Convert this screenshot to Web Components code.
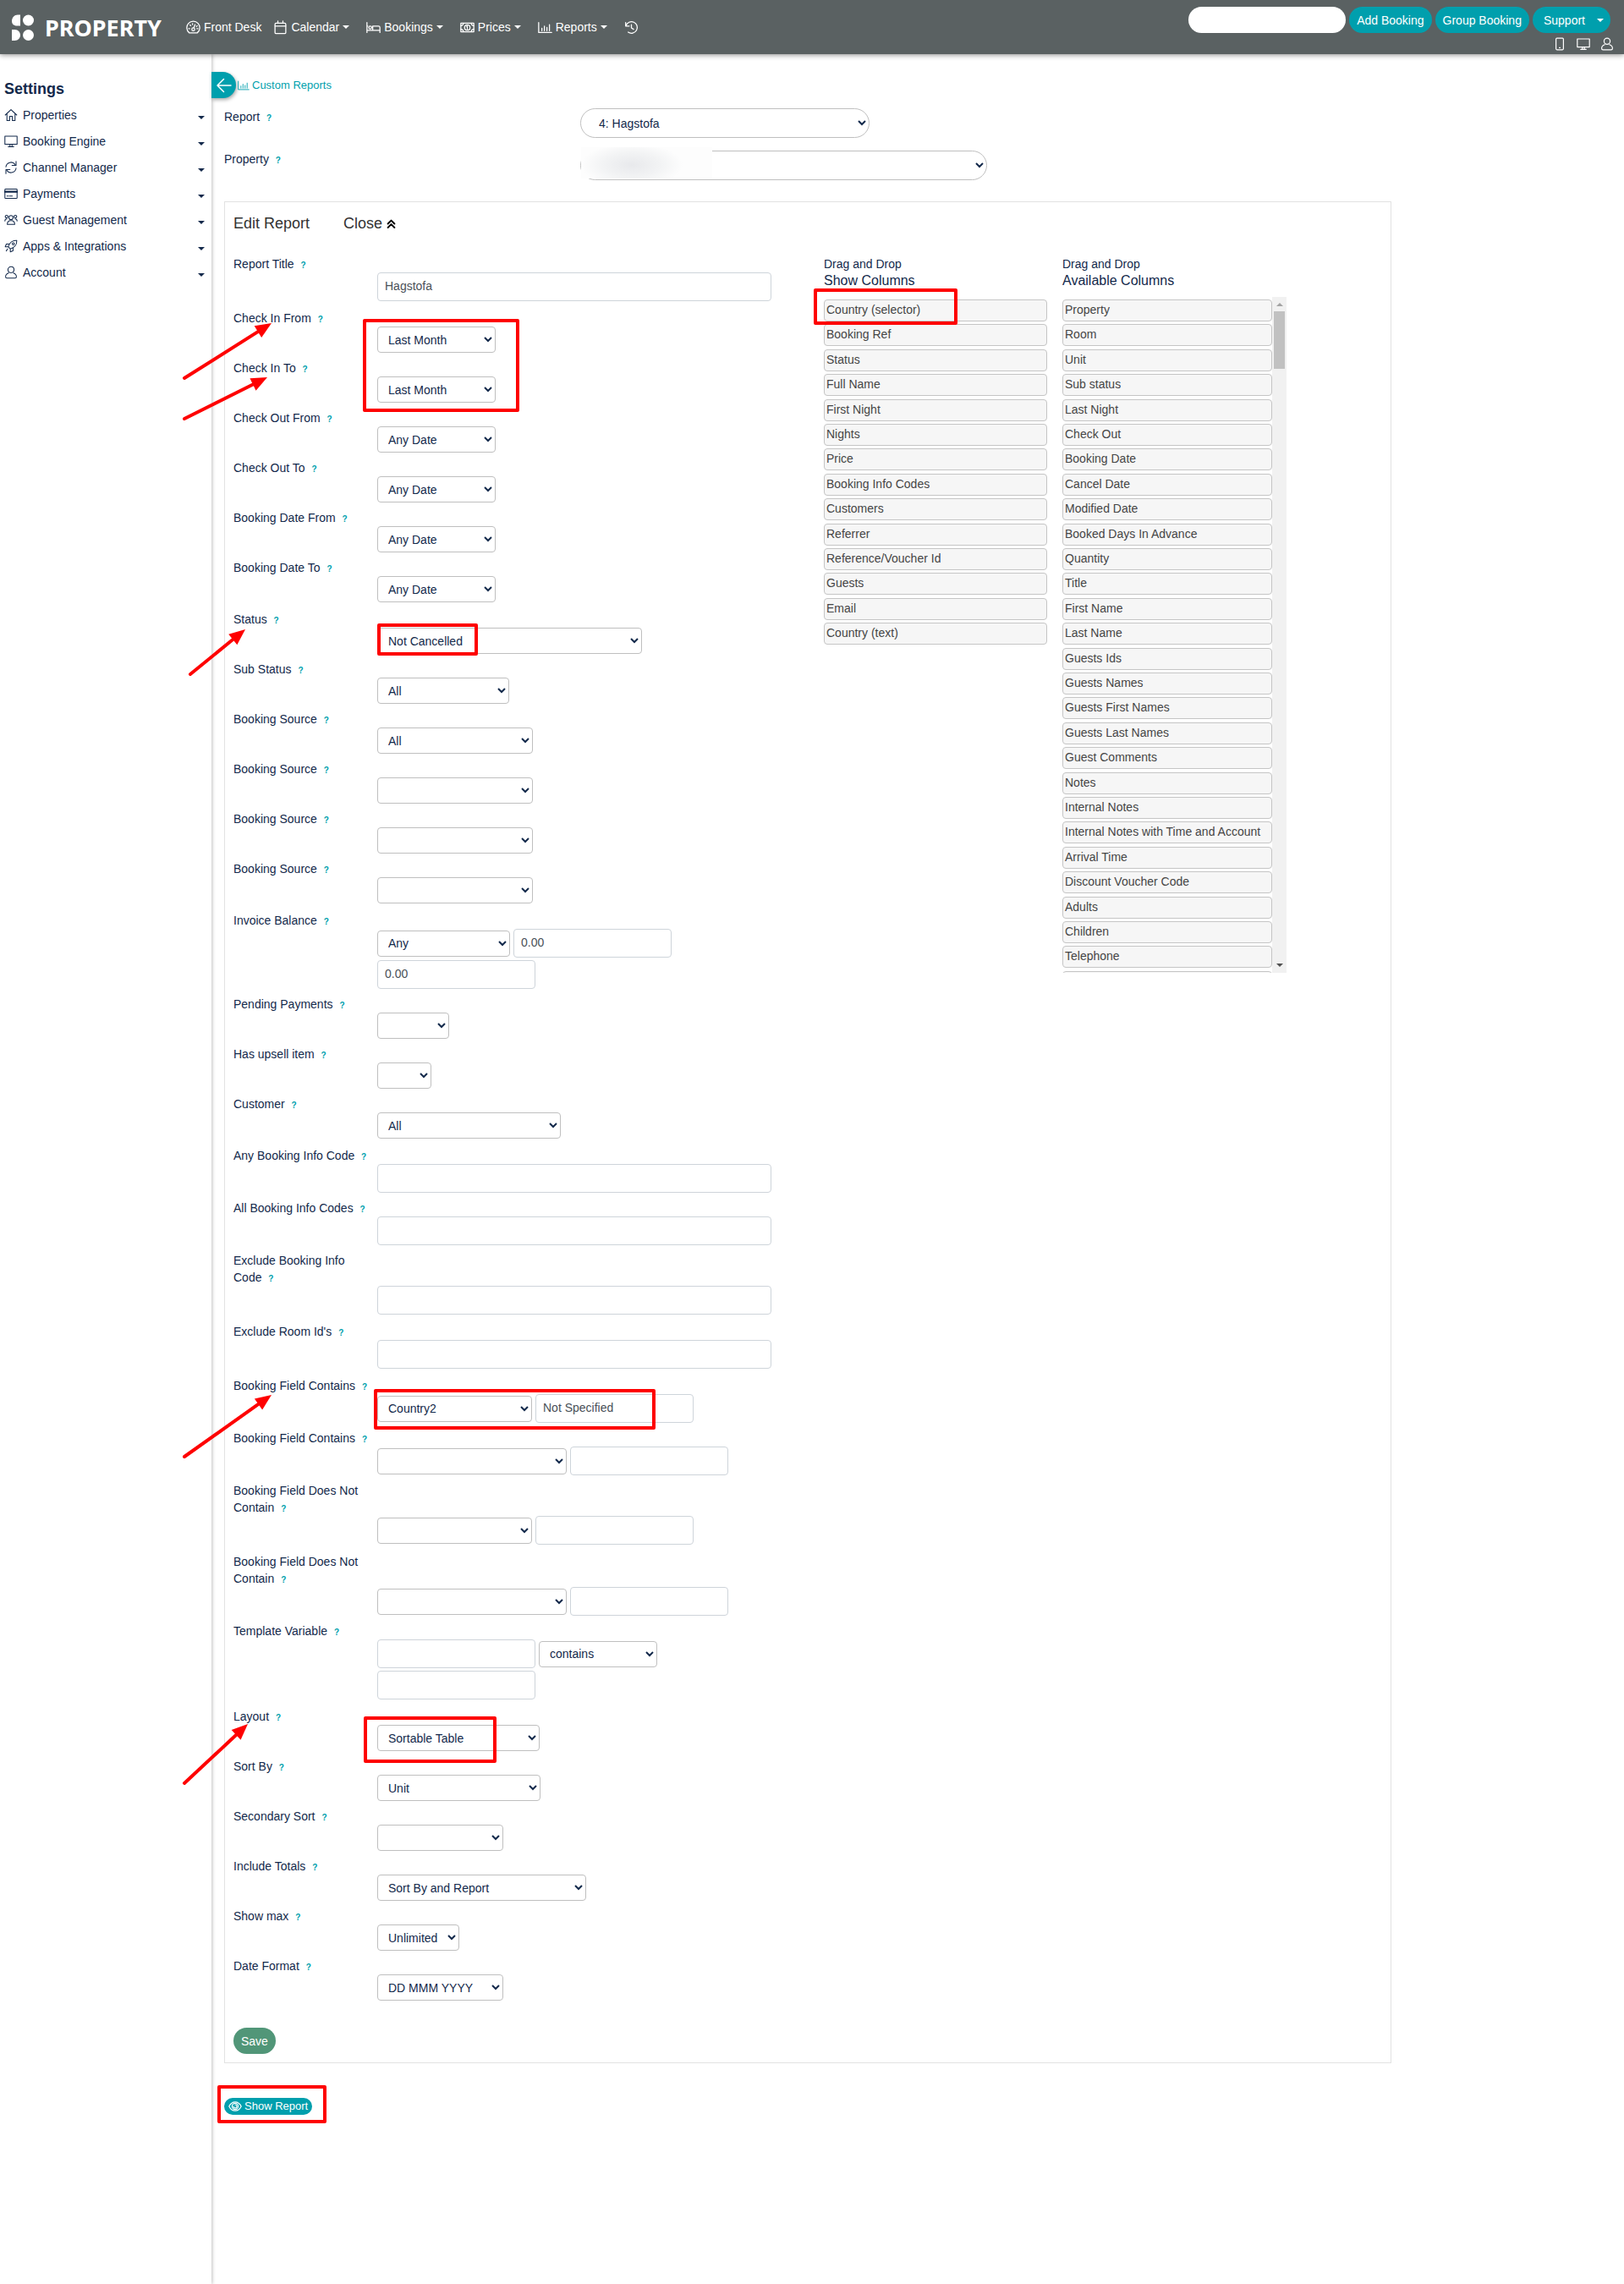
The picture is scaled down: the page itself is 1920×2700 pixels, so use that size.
<!DOCTYPE html>
<html lang="en">
<head>
<meta charset="utf-8">
<title>Custom Reports</title>
<style>
  :root {
    --teal: #009fad;
    --navy: #13294b;
    --bar: #5a6162;
    --mark: #fe0000;
  }
  html { height: 100%; }
  body {
    margin: 0;
    min-height: 100%;
    background: #fff;
    color: var(--navy);
    font: 14px/20px "Liberation Sans", Arial, sans-serif;
  }
</style>
</head>
<body>
<report-app></report-app>

<script>
const sheet = (el, html) => {
  const root = el.attachShadow({ mode: 'open' });
  root.innerHTML = html;
  return root;
};

/* ---------- icons ---------- */
const ICONS = {
  gauge: '<path d="M4.500 17.500A9 9 0 1 1 15.500 17.500Z"/><circle cx="10" cy="12.500" r="2"/><path d="M10.800 10.500 12.500 6M3.500 11.500H5M15 11.500h1.500M5.500 6.500l1 1M9 4.500V6M15.500 7.500l-1 1"/>',
  calendar: '<rect x="2.500" y="4" width="15" height="14.500" rx="1.500"/><path d="M2.500 8h15M6.500 1V4M13.500 1V4"/>',
  bed: '<path d="M1 3v14M1 14h18v3M19 14v-4a2 2 0 0 0-2-2H9v6M1 8h1"/><circle cx="5.500" cy="10" r="2"/>',
  money: '<rect x="1" y="4" width="18" height="12"/><circle cx="10" cy="10" r="3.800"/><path d="M1 7.500A3.500 3.500 0 0 0 4.500 4M19 7.500A3.500 3.500 0 0 1 15.500 4M1 12.500A3.500 3.500 0 0 1 4.500 16M19 12.500a3.500 3.500 0 0 0-3.500 3.500M10 7.800v4.400M9 8.500h1"/>',
  chart: '<path d="M1 3v14h18M5.500 11v3.500M9 8v6.500M12.500 10v4.500M16 6v8.500"/>',
  history: '<path d="M2 3v5h5M2.500 7.500A8 8 0 1 1 5.500 16.500M10 6v4.500l3 2"/>',
  phone: '<rect x="4.500" y="1.500" width="11" height="17" rx="1.500"/><path d="M9.500 15.500h1"/>',
  monitor: '<path d="M1 2.500h18v12H1ZM8.500 14.500v3M11.500 14.500v3M6 18h8"/>',
  user: '<circle cx="10" cy="6" r="4.500"/><path d="M6.500 11C3.500 12 2 14.500 2 16.500a2 2 0 0 0 2 2h12a2 2 0 0 0 2-2c0-2-1.500-4.500-4.500-5.500"/>',
  home: '<path d="M1.500 10 10 2l8.500 8M4 8v10h4v-6h4v6h4V8"/>',
  sync: '<path d="M2.500 9A7.500 7.500 0 0 1 16 5.500M17.500 1v6h-6M17.500 11A7.500 7.500 0 0 1 4 14.500M2.500 19v-6h6"/>',
  card: '<rect x="1" y="3" width="18" height="14" rx="1"/><path d="M1 7h18" stroke-width="3"/><path d="M4 13.500h2.500M8 13.500h4"/>',
  group: '<circle cx="10" cy="6.500" r="3"/><circle cx="3.500" cy="5" r="2"/><circle cx="16.500" cy="5" r="2"/><path d="M4.500 16.500c0-3.500 1.500-5.500 5.500-5.500s5.500 2 5.500 5.500ZM1 11.500c0-2 1-3 3-3M19 11.500c0-2-1-3-3-3"/>',
  rocket: '<path d="M18.500 1.500C12 1 7.500 5.500 6 11l3 3c5.500-1.500 10-6 9.500-12.500ZM7.500 7H3L1.500 11l4.500 0M13 12.500V17l-4 1.500V14M5 14l-2 3"/><circle cx="13.500" cy="6.500" r="1.600"/>',
  arrow: '<path d="M18 10H2.500M9.500 2.500 2 10l7.500 7.500"/>',
  eye: '<path d="M1 10c2-4 5.500-6.500 9-6.500s7 2.500 9 6.500c-2 4-5.500 6.500-9 6.500S3 14 1 10Z"/><circle cx="10" cy="10" r="4.500"/><path d="M10 7.500a2.500 2.500 0 1 1-2.500 2.500"/>',
  collapse: '<path d="m4 10 6-6 6 6M4 17l6-6 6 6"/>'
};
customElements.define('ui-icon', class extends HTMLElement {
  connectedCallback() {
    const s = this.getAttribute('size') || 16;
    const w = this.getAttribute('weight') || 1.5;
    sheet(this, `<style>:host{display:inline-flex;flex:none}svg{display:block;fill:none;stroke:currentColor;stroke-linejoin:round;stroke-linecap:round}</style>
      <svg width="${s}" height="${s}" viewBox="0 0 20 20" stroke-width="${w}" aria-hidden="true">${ICONS[this.getAttribute('name')]}</svg>`);
  }
});

customElements.define('ui-caret', class extends HTMLElement {
  connectedCallback() {
    sheet(this, `<style>:host{display:inline-block;flex:none;border:4px solid transparent;border-top-color:currentColor;border-bottom:0}</style>`);
  }
});

/* ---------- top bar ---------- */
customElements.define('brand-logo', class extends HTMLElement {
  connectedCallback() {
    sheet(this, `<style>
      :host{display:flex;align-items:center;gap:13px;color:#fff;font:bold 27px/32px "Noto Sans",sans-serif}
      svg{display:block;fill:currentColor}</style>
      <svg width="26" height="32" viewBox="0 0 26 32" aria-hidden="true">
        <path d="M10 .5v13H6C2 13.500 0 11 0 8 0 4 3 .5 7 .5ZM0 18h3.500c4 0 6.500 3 6.500 6.500S7.500 31 3.500 31H0Z"/>
        <circle cx="19.500" cy="7" r="6.500"/><circle cx="19.500" cy="24.500" r="6.500"/>
      </svg><span>PROPERTY</span>`);
  }
});

customElements.define('nav-link', class extends HTMLElement {
  connectedCallback() {
    sheet(this, `<style>
      :host{display:block}
      a{display:flex;align-items:center;gap:4px;color:#fff;text-decoration:none;white-space:nowrap}</style>
      <a href="#"><ui-icon name="${this.getAttribute('icon')}" size="17"></ui-icon><slot></slot>${this.hasAttribute('menu') ? '<ui-caret></ui-caret>' : ''}</a>`);
  }
});

customElements.define('top-bar', class extends HTMLElement {
  connectedCallback() {
    sheet(this, `<style>
      :host{display:block;position:relative;z-index:2}
      header{display:flex;height:64px;background:var(--bar);box-shadow:0 1px 6px rgba(0,0,0,.45);padding:0 12px 0 14px;color:#fff}
      brand-logo{margin-top:2px;align-self:center}
      nav{display:flex;gap:20px;margin-left:29px;align-items:center}
      nav nav-link:first-child{margin-right:-6px}
      .right{margin-left:auto;padding-top:8px}
      .tools{display:flex;gap:4px;padding-right:4px}
      input{width:186px;height:31px;box-sizing:border-box;border:0;border-radius:16px;background:#fff;padding:0 12px;font:inherit}
      button{display:flex;align-items:center;height:31px;border:0;border-radius:16px;background:var(--teal);color:#fff;font:inherit;padding:0 9px;white-space:nowrap}
      button.menu{gap:14px;padding:0 8px 0 13px}
      .icons{display:flex;justify-content:flex-end;gap:12px;padding-top:5px}
      .icons a{display:flex;color:#fff}
      </style>
      <header>
        <brand-logo></brand-logo>
        <nav aria-label="Main">
          <nav-link icon="gauge">Front Desk</nav-link>
          <nav-link icon="calendar" menu>Calendar</nav-link>
          <nav-link icon="bed" menu>Bookings</nav-link>
          <nav-link icon="money" menu>Prices</nav-link>
          <nav-link icon="chart" menu>Reports</nav-link>
          <nav-link icon="history"></nav-link>
        </nav>
        <div class="right">
          <div class="tools">
            <input type="search" aria-label="Search">
            <button type="button">Add Booking</button>
            <button type="button">Group Booking</button>
            <button type="button" class="menu">Support<ui-caret></ui-caret></button>
          </div>
          <div class="icons">
            <a href="#" aria-label="Mobile"><ui-icon name="phone"></ui-icon></a>
            <a href="#" aria-label="Desktop"><ui-icon name="monitor"></ui-icon></a>
            <a href="#" aria-label="User"><ui-icon name="user"></ui-icon></a>
          </div>
        </div>
      </header>`);
  }
});

/* ---------- side menu ---------- */
customElements.define('side-link', class extends HTMLElement {
  connectedCallback() {
    sheet(this, `<style>
      :host{display:block}
      a{display:flex;align-items:center;gap:6px;height:20px;color:inherit;text-decoration:none}
      ui-caret{margin:5px 8px 0 auto}</style>
      <a href="#"><ui-icon name="${this.getAttribute('icon')}" weight="1.300"></ui-icon><slot></slot><ui-caret></ui-caret></a>`);
  }
});
customElements.define('side-menu', class extends HTMLElement {
  connectedCallback() {
    sheet(this, `<style>
      :host{display:block;box-sizing:border-box;width:250px;flex:none;padding:29px 0 0 5px;box-shadow:1px 0 4px rgba(0,0,0,.25)}
      h2{margin:0 0 9px;font:bold 18px/24px "Liberation Sans",Arial,sans-serif}
      nav{display:flex;flex-direction:column;gap:11px}
      </style>
      <h2>Settings</h2>
      <nav aria-label="Settings">
        <side-link icon="home">Properties</side-link>
        <side-link icon="monitor">Booking Engine</side-link>
        <side-link icon="sync">Channel Manager</side-link>
        <side-link icon="card">Payments</side-link>
        <side-link icon="group">Guest Management</side-link>
        <side-link icon="rocket">Apps &amp; Integrations</side-link>
        <side-link icon="user">Account</side-link>
      </nav>`);
  }
});

/* ---------- form rows ---------- */
const FIELD_CSS = `
  .label{color:var(--navy)}
  .help{margin-left:4px;color:var(--teal);font-size:10px;line-height:10px;font-weight:bold;text-decoration:none}
  select,input{box-sizing:border-box;max-width:100%;background-color:#fff;border:1px solid #bfbfbf;border-radius:4px;font:inherit}
  select{height:31px;color:var(--navy);padding:0 0 0 8px}
  input{height:34px;color:#495057;border-color:#ced4da;padding:0 8px 2px}`;

/* controls="kind:width:value; ..." where kind is select or input */
function controls(spec, label) {
  return spec.split(';').map((part, i) => {
    const [kind, width, value = ''] = part.split(':').map(s => s.trim());
    const name = i ? `aria-label="${label} ${i + 1}"` : 'id="f"';
    return kind === 'select'
      ? `<select ${name} style="width:${width}px"><option>${value}</option></select>`
      : `<input type="text" ${name} style="width:${width}px" value="${value}">`;
  }).join('');
}
customElements.define('form-field', class extends HTMLElement {
  connectedCallback() {
    const label = this.getAttribute('label');
    sheet(this, `<style>${FIELD_CSS}
      :host{display:block}
      .label{width:162px}
      .controls{display:flex;flex-wrap:wrap;align-items:center;gap:3px 4px;margin-left:170px}</style>
      <div class="label"><label for="f">${label}</label> <a class="help" href="#" aria-label="Help">?</a></div>
      <div class="controls">${controls(this.getAttribute('controls'), label)}</div>`);
  }
});
customElements.define('field-group', class extends HTMLElement {
  connectedCallback() {
    sheet(this, `<style>:host{display:flex;flex-direction:column;gap:8px}</style><slot></slot>`);
  }
});
customElements.define('filter-field', class extends HTMLElement {
  connectedCallback() {
    const label = this.getAttribute('label');
    const masked = this.hasAttribute('masked');
    sheet(this, `<style>${FIELD_CSS}
      :host{display:grid;grid-template-columns:421px 1fr;align-items:start}
      .box{position:relative}
      select{display:block;width:${this.getAttribute('width')}px;height:35px;border-radius:18px;padding-left:17px}
      .mask{position:absolute;left:1px;top:-4px;width:155px;height:37px;background:radial-gradient(ellipse 60px 26px at 60px 21px,#e8e9ec 0,#f2f3f4 55%,#fdfdfd 100%)}</style>
      <div class="label"><label for="f">${label}</label> <a class="help" href="#" aria-label="Help">?</a></div>
      <div class="box"><select id="f"><option>${this.getAttribute('value') || ''}</option></select>${masked ? '<div class="mask"></div>' : ''}</div>`);
  }
});

/* ---------- drag and drop columns ---------- */
customElements.define('column-list', class extends HTMLElement {
  connectedCallback() {
    const items = this.getAttribute('items').split('|').map(t => `<li draggable="true">${t}</li>`).join('');
    sheet(this, `<style>
      :host{display:block}
      h3{margin:0 0 9px;font-size:16px;font-weight:normal;line-height:20px}
      .view{display:flex}
      ul{flex:1;margin:0;padding:3px 0 0;list-style:none}
      li{box-sizing:border-box;height:26px;margin-bottom:3px;padding:1px 2px;border:1px solid #c5c5c5;border-radius:4px;background:#f6f6f6;color:#454545;line-height:20px;white-space:nowrap}
      li:nth-child(5n+2),li:nth-child(5n+4){margin-bottom:4px}
      :host([scroll]) .view{height:799px;overflow:hidden}
      .bar{display:none}
      :host([scroll]) .bar{display:flex;flex-direction:column;align-items:center;justify-content:space-between;width:17px;background:#f1f1f1;box-sizing:border-box;padding:7px 0}
      .up,.down{border:4px solid transparent}
      .up{border-bottom-color:#a3a3a3;border-top:0}
      .down{border-top-color:#505050;border-bottom:0}
      .thumb{width:13px;height:68px;margin:6px 0 auto;background:#c1c1c1}</style>
      <div>Drag and Drop</div><h3>${this.getAttribute('heading')}</h3>
      <div class="view"><ul>${items}</ul><div class="bar"><i class="up"></i><i class="thumb"></i><i class="down"></i></div></div>`);
  }
});

/* ---------- edit panel ---------- */
customElements.define('edit-panel', class extends HTMLElement {
  connectedCallback() {
    sheet(this, `<style>
      :host{display:block;box-sizing:border-box;max-width:1380px;border:1px solid #e2e2e2;padding:13px 10px 10px}
      .head{display:flex;gap:40px;font-size:18px;line-height:24px;color:#333;margin-bottom:26px}
      h2{margin:0;font:inherit}
      .head a{display:flex;align-items:center;gap:4px;color:inherit;text-decoration:none}
      .head ui-icon{color:#000}
      .cols{display:grid;grid-template-columns:680px 264px 265px;gap:18px;align-items:start}
      form{display:flex;flex-direction:column;gap:10px;width:636px}
      button{align-self:flex-start;height:31px;margin-top:22px;padding:0 9px;border:0;border-radius:16px;background:#519678;color:#fff;font:inherit}</style>
      <div class="head"><h2>Edit Report</h2><a href="#">Close <ui-icon name="collapse" size="13" weight="3"></ui-icon></a></div>
      <div class="cols">
        <form>
          <field-group>
            <form-field label="Report Title" controls="input:466:Hagstofa"></form-field>
          </field-group>
          <field-group>
            <form-field label="Check In From" controls="select:140:Last Month"></form-field>
            <form-field label="Check In To" controls="select:140:Last Month"></form-field>
            <form-field label="Check Out From" controls="select:140:Any Date"></form-field>
            <form-field label="Check Out To" controls="select:140:Any Date"></form-field>
            <form-field label="Booking Date From" controls="select:140:Any Date"></form-field>
            <form-field label="Booking Date To" controls="select:140:Any Date"></form-field>
          </field-group>
          <field-group>
            <form-field label="Status" controls="select:313:Not Cancelled"></form-field>
            <form-field label="Sub Status" controls="select:156:All"></form-field>
            <form-field label="Booking Source" controls="select:184:All"></form-field>
            <form-field label="Booking Source" controls="select:184"></form-field>
            <form-field label="Booking Source" controls="select:184"></form-field>
            <form-field label="Booking Source" controls="select:184"></form-field>
          </field-group>
          <field-group>
            <form-field label="Invoice Balance" controls="select:157:Any;input:187:0.00;input:187:0.00"></form-field>
            <form-field label="Pending Payments" controls="select:85"></form-field>
            <form-field label="Has upsell item" controls="select:64"></form-field>
            <form-field label="Customer" controls="select:217:All"></form-field>
          </field-group>
          <field-group>
            <form-field label="Any Booking Info Code" controls="input:466"></form-field>
            <form-field label="All Booking Info Codes" controls="input:466"></form-field>
            <form-field label="Exclude Booking Info Code" controls="input:466"></form-field>
          </field-group>
          <field-group>
            <form-field label="Exclude Room Id's" controls="input:466"></form-field>
          </field-group>
          <field-group>
            <form-field label="Booking Field Contains" controls="select:183:Country2;input:187:Not Specified"></form-field>
            <form-field label="Booking Field Contains" controls="select:224;input:187"></form-field>
            <form-field label="Booking Field Does Not Contain" controls="select:183;input:187"></form-field>
          </field-group>
          <field-group>
            <form-field label="Booking Field Does Not Contain" controls="select:224;input:187"></form-field>
            <form-field label="Template Variable" controls="input:187;select:140:contains;input:187"></form-field>
          </field-group>
          <field-group>
            <form-field label="Layout" controls="select:192:Sortable Table"></form-field>
            <form-field label="Sort By" controls="select:193:Unit"></form-field>
            <form-field label="Secondary Sort" controls="select:149"></form-field>
            <form-field label="Include Totals" controls="select:247:Sort By and Report"></form-field>
            <form-field label="Show max" controls="select:97:Unlimited"></form-field>
            <form-field label="Date Format" controls="select:149:DD MMM YYYY"></form-field>
          </field-group>
          <button type="button">Save</button>
        </form>
        <column-list heading="Show Columns" items="Country (selector)|Booking Ref|Status|Full Name|First Night|Nights|Price|Booking Info Codes|Customers|Referrer|Reference/Voucher Id|Guests|Email|Country (text)"></column-list>
        <column-list scroll heading="Available Columns" items="Property|Room|Unit|Sub status|Last Night|Check Out|Booking Date|Cancel Date|Modified Date|Booked Days In Advance|Quantity|Title|First Name|Last Name|Guests Ids|Guests Names|Guests First Names|Guests Last Names|Guest Comments|Notes|Internal Notes|Internal Notes with Time and Account|Arrival Time|Discount Voucher Code|Adults|Children|Telephone|&nbsp;"></column-list>
      </div>`);
  }
});

/* ---------- page content ---------- */
customElements.define('report-page', class extends HTMLElement {
  connectedCallback() {
    sheet(this, `<style>
      :host{display:block;flex:1;padding-top:21px}
      .crumb{display:flex;align-items:center;gap:2px}
      .back{display:flex;align-items:center;justify-content:center;width:29px;height:31px;padding:0;border:0;border-radius:0 16px 16px 0;background:var(--teal);color:#fff;box-shadow:1px 2px 4px rgba(0,0,0,.35)}
      .crumb a{display:flex;align-items:center;gap:3px;color:var(--teal);text-decoration:none;font-size:13px}
      .body{padding:12px 15px 0}
      .filters{display:flex;flex-direction:column;gap:15px;margin-bottom:25px}
      .show{display:flex;align-items:center;gap:3px;height:20px;margin-top:41px;padding:0 5px;border:0;border-radius:10px;background:var(--teal);color:#fff;font:13px/20px "Liberation Sans",Arial,sans-serif}</style>
      <div class="crumb"><button class="back" type="button" aria-label="Back"><ui-icon name="arrow" size="20"></ui-icon></button>
        <a href="#"><ui-icon name="chart" size="14" weight="1.300"></ui-icon>Custom Reports</a></div>
      <div class="body">
        <div class="filters">
          <filter-field label="Report" width="342" value="4: Hagstofa"></filter-field>
          <filter-field label="Property" width="481" masked></filter-field>
        </div>
        <edit-panel></edit-panel>
        <button class="show" type="button"><ui-icon name="eye"></ui-icon>Show Report</button>
      </div>`);
  }
});

/* ---------- red callouts laid over the page ---------- */
customElements.define('callout-layer', class extends HTMLElement {
  connectedCallback() {
    const boxes = [[429,377,614,487],[446,737,565,775],[962,341,1132,384],[442,1642,775,1690],[430,2029,587,2084],[257,2465,386,2510]];
    const arrows = [[218,447,321,382],[218,495,316,446],[225,797,290,744],[218,1722,321,1649],[218,2108,293,2038]];
    const rect = ([l, t, r, b]) => `<rect x="${l + 2}" y="${t + 2}" width="${r - l - 4}" height="${b - t - 4}" stroke-width="4"/>`;
    const arrow = ([x1, y1, x2, y2]) => {
      const a = Math.atan2(y2 - y1, x2 - x1), c = Math.cos(a), s = Math.sin(a);
      const bx = x2 - 19 * c, by = y2 - 19 * s;
      return `<path d="M${x1} ${y1}L${bx} ${by}" stroke-width="4" stroke-linecap="round"/>
        <path d="M${x2} ${y2}L${bx - 8 * s} ${by + 8 * c}L${bx + 8 * s} ${by - 8 * c}Z" fill="var(--mark)" stroke="none"/>`;
    };
    sheet(this, `<style>:host{position:absolute;inset:0;z-index:3;pointer-events:none}svg{display:block;width:100%;height:100%;fill:none;stroke:var(--mark);stroke-linejoin:round;overflow:visible}</style>
      <svg aria-hidden="true">${boxes.map(rect).join('')}${arrows.map(arrow).join('')}</svg>`);
  }
});

customElements.define('report-app', class extends HTMLElement {
  connectedCallback() {
    sheet(this, `<style>
      :host{display:flex;flex-direction:column;position:relative;min-height:100vh}
      .main{display:flex;flex:1}</style>
      <top-bar></top-bar>
      <div class="main"><side-menu></side-menu><report-page></report-page></div>
      <callout-layer></callout-layer>`);
  }
});
</script>
</body>
</html>
